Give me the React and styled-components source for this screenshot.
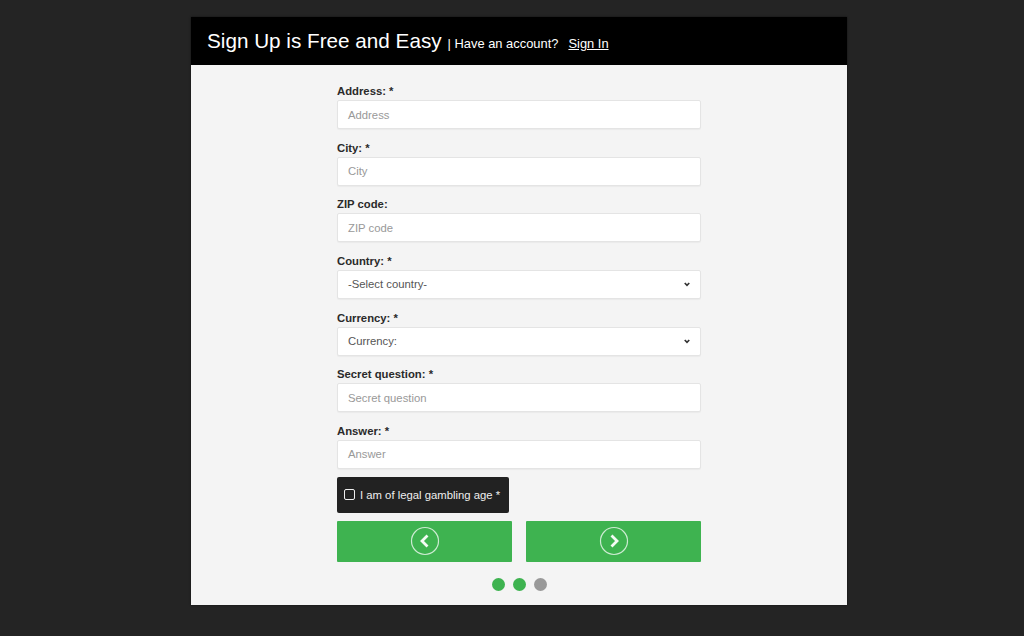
import styled, { createGlobalStyle } from "styled-components";

const fields = [
  { label: "Address: *", placeholder: "Address" },
  { label: "City: *", placeholder: "City" },
  { label: "ZIP code:", placeholder: "ZIP code" },
  { label: "Country: *", value: "-Select country-", select: true },
  { label: "Currency: *", value: "Currency:", select: true },
  { label: "Secret question: *", placeholder: "Secret question" },
  { label: "Answer: *", placeholder: "Answer" },
];

const steps = [true, true, false];

const GlobalStyle = createGlobalStyle`
  html, body {
    margin: 0;
    height: 100%;
    background: #242424;
  }
  body {
    font-family: "Liberation Sans", Arial, sans-serif;
  }
`;

const Page = styled.div`
  width: 1024px;
  height: 636px;
  box-sizing: border-box;
  padding: 17px 177px 0 191px;
  overflow: hidden;
`;

const Panel = styled.div`
  width: 656px;
  height: 588px;
  background: #f4f4f4;
  box-shadow: 0 0 2px rgba(0, 0, 0, 0.6);
`;

const Header = styled.div`
  height: 48px;
  background: #000;
  color: #fff;
  display: flex;
  align-items: center;
  padding: 0 16px;
  box-sizing: border-box;
`;

const Title = styled.span`
  font-size: 20.7px;
  margin-right: 6px;
`;

const Sub = styled.span`
  font-size: 12.9px;
  margin-top: 4px;
`;

const SignIn = styled.a`
  font-size: 12.9px;
  margin: 4px 0 0 10px;
  color: #fff;
  text-decoration: underline;
`;

const Form = styled.form`
  width: 364px;
  margin: 0 146px;
  padding: 19px 0 0;
  display: flex;
  flex-direction: column;
`;

const Field = styled.div`
  height: 56.67px;
  display: flex;
  flex-direction: column;
`;

const Label = styled.label`
  font-size: 11.3px;
  line-height: 14px;
  height: 16px;
  font-weight: 700;
  color: #2a2a2a;
`;

const Control = styled.div`
  height: 29px;
  box-sizing: border-box;
  background: #fff;
  border: 1px solid #e4e4e4;
  border-radius: 2px;
  box-shadow: 0 1px 1px rgba(0, 0, 0, 0.04);
  padding: 0 10px;
  display: flex;
  align-items: center;
  justify-content: space-between;
  font-size: 11.3px;
  color: ${(props) => (props.$select ? "#555" : "#999")};
`;

const Chevron = styled.svg`
  width: 6px;
  height: 5px;
`;

const AgeBox = styled.label`
  align-self: flex-start;
  width: 172px;
  height: 36px;
  margin-top: -4px;
  background: #222;
  border-radius: 2px;
  box-sizing: border-box;
  padding: 0 7px;
  display: flex;
  align-items: center;
  gap: 5px;
  color: #eee;
  font-size: 11.3px;
  white-space: nowrap;
`;

const CheckMark = styled.span`
  width: 9px;
  height: 9px;
  border: 1.5px solid #eee;
  border-radius: 2px;
  flex: none;
`;

const Buttons = styled.div`
  display: flex;
  justify-content: space-between;
  margin-top: 8px;
`;

const NavButton = styled.button`
  width: 175px;
  height: 41px;
  padding: 0;
  border: none;
  border-radius: 1px;
  background: #3eb350;
  display: flex;
  align-items: center;
  justify-content: center;
`;

const Dots = styled.div`
  display: flex;
  justify-content: center;
  gap: 8px;
  margin-top: 16px;
`;

const Dot = styled.span`
  width: 13px;
  height: 13px;
  border-radius: 50%;
  background: ${(props) => (props.$done ? "#3eb350" : "#999")};
`;

function Arrow({ back }) {
  return (
    <svg width="30" height="30" viewBox="0 0 30 30" fill="none">
      <circle cx="15" cy="15" r="13.5" strokeWidth="1.2" stroke="#cdebd2" />
      <path
        d={back ? "M17.5 9.5 12 15l5.5 5.5" : "M12.5 9.5 18 15l-5.5 5.5"}
        strokeWidth="2.8"
        stroke="#f4fbf5"
      />
    </svg>
  );
}

export default function App() {
  return (
    <Page>
      <GlobalStyle />
      <Panel>
        <Header>
          <Title>Sign Up is Free and Easy</Title>
          <Sub>| Have an account?</Sub>
          <SignIn href="#">Sign In</SignIn>
        </Header>
        <Form>
          {fields.map((f) => (
            <Field key={f.label}>
              <Label>{f.label}</Label>
              <Control $select={f.select}>
                {f.select ? f.value : f.placeholder}
                {f.select && (
                  <Chevron viewBox="0 0 7 6" fill="none" stroke="#333" strokeWidth="2">
                    <path d="M.8 1.2 3.5 4l2.7-2.8" />
                  </Chevron>
                )}
              </Control>
            </Field>
          ))}
          <AgeBox>
            <CheckMark />I am of legal gambling age *
          </AgeBox>
          <Buttons>
            <NavButton type="button">
              <Arrow back />
            </NavButton>
            <NavButton type="button">
              <Arrow />
            </NavButton>
          </Buttons>
          <Dots>
            {steps.map((done, i) => (
              <Dot key={i} $done={done} />
            ))}
          </Dots>
        </Form>
      </Panel>
    </Page>
  );
}
